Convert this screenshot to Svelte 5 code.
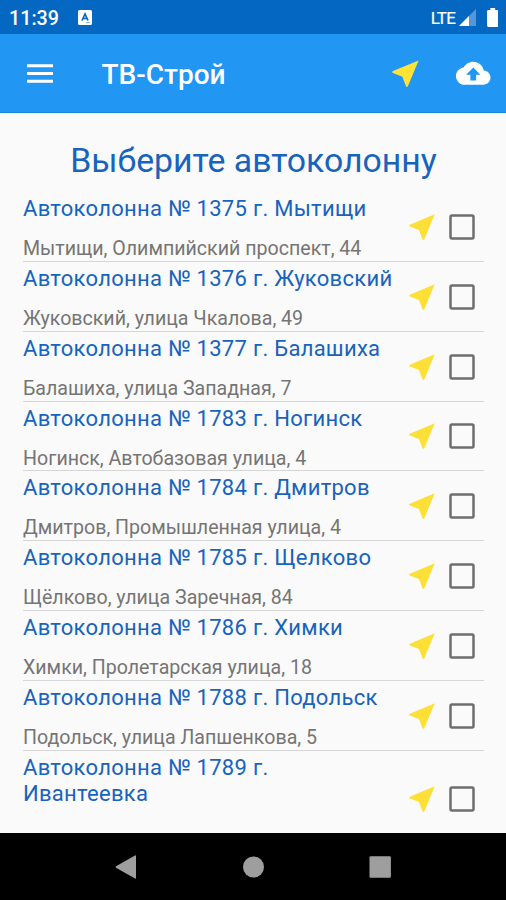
<script>
  const columns = [
    { name: 'Автоколонна № 1375 г. Мытищи', address: 'Мытищи, Олимпийский проспект, 44' },
    { name: 'Автоколонна № 1376 г. Жуковский', address: 'Жуковский, улица Чкалова, 49' },
    { name: 'Автоколонна № 1377 г. Балашиха', address: 'Балашиха, улица Западная, 7' },
    { name: 'Автоколонна № 1783 г. Ногинск', address: 'Ногинск, Автобазовая улица, 4' },
    { name: 'Автоколонна № 1784 г. Дмитров', address: 'Дмитров, Промышленная улица, 4' },
    { name: 'Автоколонна № 1785 г. Щелково', address: 'Щёлково, улица Заречная, 84' },
    { name: 'Автоколонна № 1786 г. Химки', address: 'Химки, Пролетарская улица, 18' },
    { name: 'Автоколонна № 1788 г. Подольск', address: 'Подольск, улица Лапшенкова, 5' },
    { name: 'Автоколонна № 1789 г. Ивантеевка', address: '' }
  ];
</script>

{#snippet arrow()}
  <svg class="arrow" viewBox="0 0 24 24"><path d="M21 3L3 10.53v.98l6.84 2.65L12.48 21h.98L21 3z" /></svg>
{/snippet}

<div class="screen">
  <div class="status">
    <span class="time">11:39</span>
    <svg class="badge" viewBox="0 0 14 15">
      <rect width="14" height="15" rx="1.5" fill="#fff" />
      <path d="M4 10.5L7 4l3 6.5M5 8.5h4" fill="none" stroke="#0468c2" stroke-width="1.7" />
      <path d="M8 12.5h4" stroke="#8db9e2" stroke-width="1" />
    </svg>
    <span class="lte">LTE</span>
    <svg class="signal" viewBox="0 0 17 17">
      <path d="M17 0v17H0z" fill="#5597d6" />
      <path d="M10 7v10H0z" fill="#fff" />
    </svg>
    <svg class="battery" viewBox="0 0 12 20">
      <path d="M3.5 0h5v2h2q1.5 0 1.5 1.5v15q0 1.5-1.5 1.5h-9Q0 20 0 18.5v-15Q0 2 1.5 2h2z" fill="#fff" />
    </svg>
  </div>

  <header>
    <svg class="menu" viewBox="0 0 27 19"><path d="M0 0h27v3.2H0zM0 7.9h27v3.2H0zM0 15.8h27V19H0z" fill="#fff" /></svg>
    <h1>ТВ-Строй</h1>
    {@render arrow()}
    <svg class="cloud" viewBox="0 0 24 24">
      <path d="M19.35 10.04C18.67 6.59 15.64 4 12 4 9.11 4 6.6 5.64 5.35 8.04 2.34 8.36 0 10.91 0 14c0 3.31 2.69 6 6 6h13c2.76 0 5-2.24 5-5 0-2.64-2.05-4.78-4.65-4.96zM14 13v4h-4v-4H7l5-5 5 5h-3z" fill="#fff" />
    </svg>
  </header>

  <main>
    <h2>Выберите автоколонну</h2>
    <ul>
      {#each columns as item}
        <li>
          <div class="info">
            <span class="name">{item.name}</span>
            {#if item.address}<span class="address">{item.address}</span>{/if}
          </div>
          {@render arrow()}
          <svg class="check" viewBox="0 0 26 26" role="checkbox" aria-checked="false" aria-label={item.name} tabindex="0">
            <rect x="1.5" y="1.5" width="23" height="23" rx="1.5" />
          </svg>
        </li>
      {/each}
    </ul>
  </main>

  <nav>
    <svg viewBox="0 0 24 24"><path d="M22 1v22q0 1-1 .5L2 12.7q-1-.7 0-1.4L21 .5q1-.5 1 .5z" /></svg>
    <svg viewBox="0 0 24 24"><circle cx="12.5" cy="12" r="10.5" /></svg>
    <svg viewBox="0 0 24 24"><rect x="1.5" y="1.3" width="21.4" height="21.4" rx="1.3" /></svg>
  </nav>
</div>

<style>
  .screen {
    width: 506px;
    height: 900px;
    display: flex;
    flex-direction: column;
    overflow: hidden;
    background: #fafafa;
    font-family: Roboto, 'Liberation Sans', sans-serif;
  }
  svg { display: block; flex: none; }
  h1, h2, ul { margin: 0; padding: 0; }
  .status {
    flex: none;
    height: 34px;
    display: flex;
    align-items: center;
    box-sizing: border-box;
    padding: 1px 8px 0 9px;
    background: #0468c2;
    color: #fff;
  }
  .time { width: 69px; padding-top: 2px; font-size: 19.7px; font-weight: 500; }
  .badge { width: 14px; height: 15px; }
  .lte { margin-left: auto; font-size: 17px; letter-spacing: -0.8px; -webkit-text-stroke: 0.2px #fff; }
  .signal { width: 17px; height: 17px; margin: 0 10.5px 0 4px; }
  .battery { width: 11.5px; height: 19px; }
  header {
    flex: none;
    height: 79px;
    display: flex;
    align-items: center;
    box-sizing: border-box;
    padding: 1px 15.5px 0 26.5px;
    background: #2196f3;
    border-bottom: 1px solid #1488dc;
    color: #fff;
  }
  .menu { width: 26.5px; height: 19px; }
  h1 { margin-left: 48.5px; padding-top: 2px; flex: 1; font-size: 28px; line-height: 34px; font-weight: 500; }
  .arrow { width: 34px; height: 34px; fill: #fedf35; }
  header .arrow { width: 35px; height: 35px; margin-right: 33px; fill: #ffe233; }
  .cloud { width: 34.5px; height: 34.5px; }
  main { flex: 1; min-height: 0; overflow: hidden; padding: 0 22px 0 23px; }
  h2 {
    height: 79px;
    padding-top: 27px;
    box-sizing: border-box;
    text-align: center;
    color: #1763bd;
    font-size: 33.8px;
    line-height: 42px;
    font-weight: 400;
    white-space: nowrap;
  }
  ul { list-style: none; }
  li {
    height: 69.85px;
    box-sizing: border-box;
    display: flex;
    align-items: center;
    border-bottom: 1px solid #d6d6d6;
  }
  li .arrow, .check { margin-top: 1px; }
  li:last-child { height: 95px; border: 0; }
  .info {
    width: 382px;
    height: 100%;
    display: flex;
    flex-direction: column;
    box-sizing: border-box;
    padding-top: 4px;
  }
  .name { width: 375px; color: #1763bd; font-size: 22px; line-height: 26.5px; letter-spacing: 0.28px; }
  .address { margin-top: 13.5px; color: #757575; font-size: 19.6px; line-height: 26px; white-space: nowrap; }
  .check {
    width: 26px;
    height: 26px;
    margin-left: 9.5px;
    fill: none;
    stroke: #6e6e6e;
    stroke-width: 2.5px;
  }
  nav {
    flex: none;
    height: 67px;
    display: flex;
    align-items: center;
    justify-content: center;
    gap: 103px;
    background: #000;
  }
  nav svg { width: 24px; height: 24px; fill: #9e9e9e; }
</style>
